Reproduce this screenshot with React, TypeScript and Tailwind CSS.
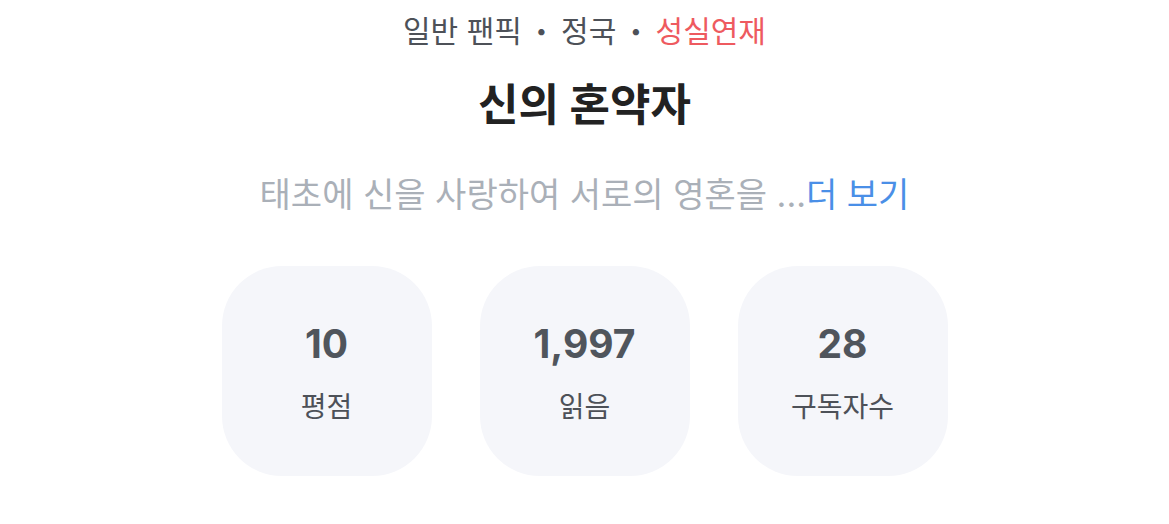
export default function App() {
  const stats = [
    { value: '10', label: '평점' },
    { value: '1,997', label: '읽음' },
    { value: '28', label: '구독자수' },
  ];

  return (
    <div
      className="w-[1169px] h-[524px] bg-white flex flex-col items-center overflow-hidden"
      style={{ fontFamily: '"Inter", "Noto Sans CJK KR", sans-serif' }}
    >
      {/* 분류 */}
      <p className="mt-[11px] h-[40px] flex items-center gap-[14px] text-[30px] text-[#4d5158] leading-none">
        <span>일반 팬픽</span>
        <span className="text-[20px]">•</span>
        <span>정국</span>
        <span className="text-[20px]">•</span>
        <span className="text-[#ee5a5f]">성실연재</span>
      </p>

      {/* 제목 */}
      <h1 className="mt-[28px] text-[44px] font-bold text-[#222222] leading-[52px]">
        신의 혼약자
      </h1>

      {/* 소개 */}
      <p className="mt-[42px] text-[34px] text-[#aab0b8] leading-[44px]">
        태초에 신을 사랑하여 서로의 영혼을 ...
        <span className="text-[#4a8fe7]">더 보기</span>
      </p>

      {/* 통계 */}
      <div className="mt-[49px] flex gap-[48px]">
        {stats.map((s) => (
          <div
            key={s.label}
            className="w-[210px] h-[210px] rounded-[60px] bg-[#f5f6fa] flex flex-col items-center pt-[58px]"
          >
            <p className="text-[39px] font-bold text-[#50555c] leading-none">
              {s.value}
            </p>
            <p className="mt-[30px] text-[28px] text-[#4d5158] leading-none">
              {s.label}
            </p>
          </div>
        ))}
      </div>
    </div>
  );
}
